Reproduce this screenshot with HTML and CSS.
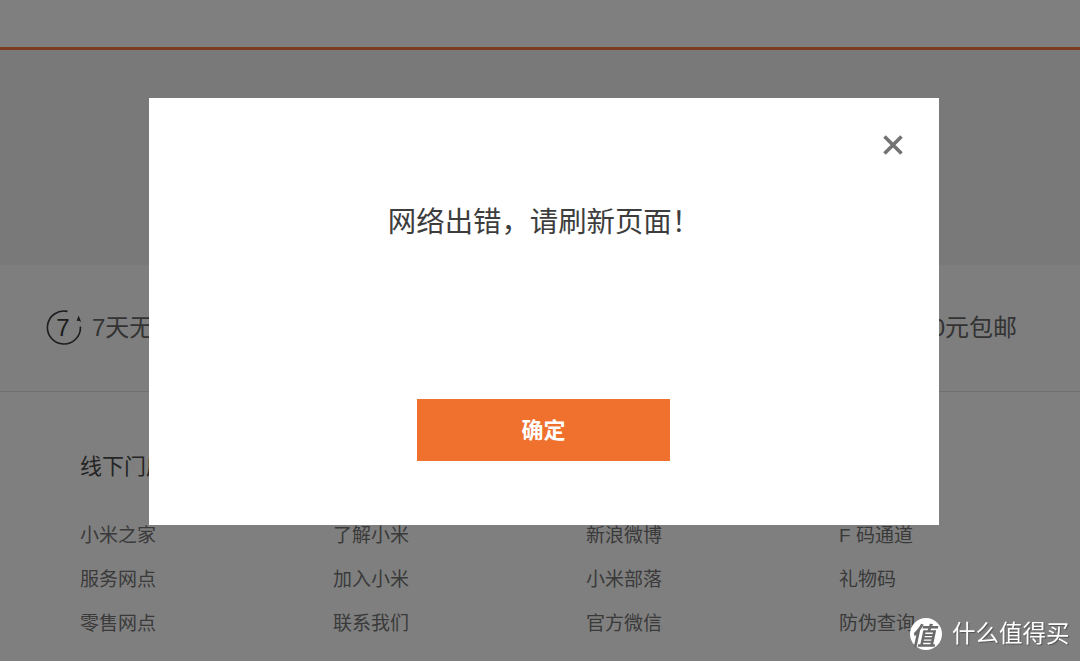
FILE: index.html
```html
<!DOCTYPE html>
<html lang="zh-CN">
<head>
    <meta charset="UTF-8">
    <meta name="viewport" content="width=device-width, initial-scale=1.0">
    <title>小米</title>
    <link rel="stylesheet" href="styles.css">
</head>
<body>
    <header class="top-bar"></header>
    <div class="hero"></div>

    <div class="services">
        <div class="service">
            <svg class="service-icon" width="38" height="38" viewBox="0 0 38 38">
                <path d="M22.5 2.4A16.5 16.5 0 1 0 35.4 17.5" fill="none" stroke="#3a3a3a" stroke-width="1.6"/>
                <path d="M31.6 12l2-5.4 2.6 6.4-2.3-1.2z" fill="#3a3a3a"/>
                <text x="18" y="27" class="service-num">7</text>
            </svg>
            <span>7天无理由退货</span>
        </div>
        <div class="service"><span>15天免费换货</span></div>
        <div class="service"><span>满150元包邮</span></div>
    </div>

    <footer class="links">
        <div class="link-col">
            <h4>线下门店</h4>
            <a>小米之家</a>
            <a>服务网点</a>
            <a>零售网点</a>
        </div>
        <div class="link-col">
            <h4>关于小米</h4>
            <a>了解小米</a>
            <a>加入小米</a>
            <a>联系我们</a>
        </div>
        <div class="link-col">
            <h4>关注我们</h4>
            <a>新浪微博</a>
            <a>小米部落</a>
            <a>官方微信</a>
        </div>
        <div class="link-col">
            <h4>特色服务</h4>
            <a>F 码通道</a>
            <a>礼物码</a>
            <a>防伪查询</a>
        </div>
    </footer>

    <div class="overlay">
        <div class="modal">
            <button class="modal-close" aria-label="关闭">
                <svg width="22" height="22" viewBox="0 0 22 22">
                    <path d="M2.5 2.5l17 17M19.5 2.5l-17 17" stroke="#737373" stroke-width="3.6" fill="none"/>
                </svg>
            </button>
            <p class="modal-msg">网络出错&#xFF0C;请刷新页面&#xFF01;</p>
            <button class="modal-ok">确定</button>
        </div>
    </div>

    <!-- site watermark -->
    <div class="watermark">
        <span class="watermark-badge"><span>值</span></span>
        <span class="watermark-name">什么值得买</span>
    </div>
</body>
</html>
```

FILE: styles.css
```css
html, body {
    height: 100%;
}
body {
    font-family: "Liberation Sans", "Noto Sans CJK SC", sans-serif;
    margin: 0;
    padding: 0;
    background-color: #fff;
    color: #333;
    overflow: hidden;
}
.top-bar {
    height: 47px;
    border-bottom: 3px solid #f97a3c;
    background-color: #fff;
}
.hero {
    height: 215px;
    background-color: #f3f3f3;
}
.services {
    display: flex;
    justify-content: space-between;
    align-items: center;
    height: 120px;
    padding: 0 63px 6px 45px;
    border-bottom: 1px solid #e0e0e0;
    background-color: #fcfcfc;
    font-size: 24px;
    color: #666;
}
.service {
    display: flex;
    align-items: center;
    gap: 9px;
}
.service-icon {
    flex: none;
    margin-top: 6px;
}
.service-num {
    font-size: 24px;
    text-anchor: middle;
    fill: #3a3a3a;
}
.links {
    display: grid;
    grid-template-columns: repeat(4, 253px);
    padding: 60px 0 0 80px;
    background-color: #fff;
}
.link-col h4 {
    margin: 0 0 41px;
    font-size: 22px;
    line-height: 30px;
    font-weight: normal;
    color: #4a4a4a;
}
.link-col a {
    display: block;
    font-size: 19px;
    line-height: 26px;
    margin-bottom: 18px;
    color: #757575;
}
.overlay {
    position: fixed;
    top: 0;
    left: 0;
    right: 0;
    bottom: 0;
    background-color: rgba(0, 0, 0, 0.5);
}
.modal {
    position: relative;
    display: flex;
    flex-direction: column;
    align-items: center;
    box-sizing: border-box;
    width: 790px;
    height: 427px;
    margin: 98px 0 0 149px;
    padding-top: 103px;
    background-color: #fff;
}
.modal-close {
    position: absolute;
    top: 36px;
    right: 35px;
    padding: 0;
    border: none;
    background: none;
    line-height: 0;
}
.modal-msg {
    margin: 0;
    font-size: 28.4px;
    line-height: 42px;
    color: #3d3d3d;
}
.modal-ok {
    width: 253px;
    height: 62px;
    margin: 156px 2px 0 0;
    padding: 0 0 4px 1px;
    border: none;
    background-color: #f0702e;
    color: #fff;
    font-family: inherit;
    font-size: 22px;
    font-weight: bold;
}
.watermark {
    position: fixed;
    left: 910px;
    top: 618px;
    display: flex;
    align-items: center;
    gap: 10px;
}
.watermark-badge {
    display: flex;
    align-items: center;
    justify-content: center;
    width: 32px;
    height: 32px;
    border-radius: 50%;
    background-color: #fff;
    color: #6a6a6a;
    font-size: 25px;
    font-weight: bold;
}
.watermark-badge span {
    transform: skewX(-12deg);
}
.watermark-name {
    font-size: 23.5px;
    line-height: 32px;
    color: #fff;
    text-shadow: 1px 1px 1px rgba(0, 0, 0, 0.35);
}
```
